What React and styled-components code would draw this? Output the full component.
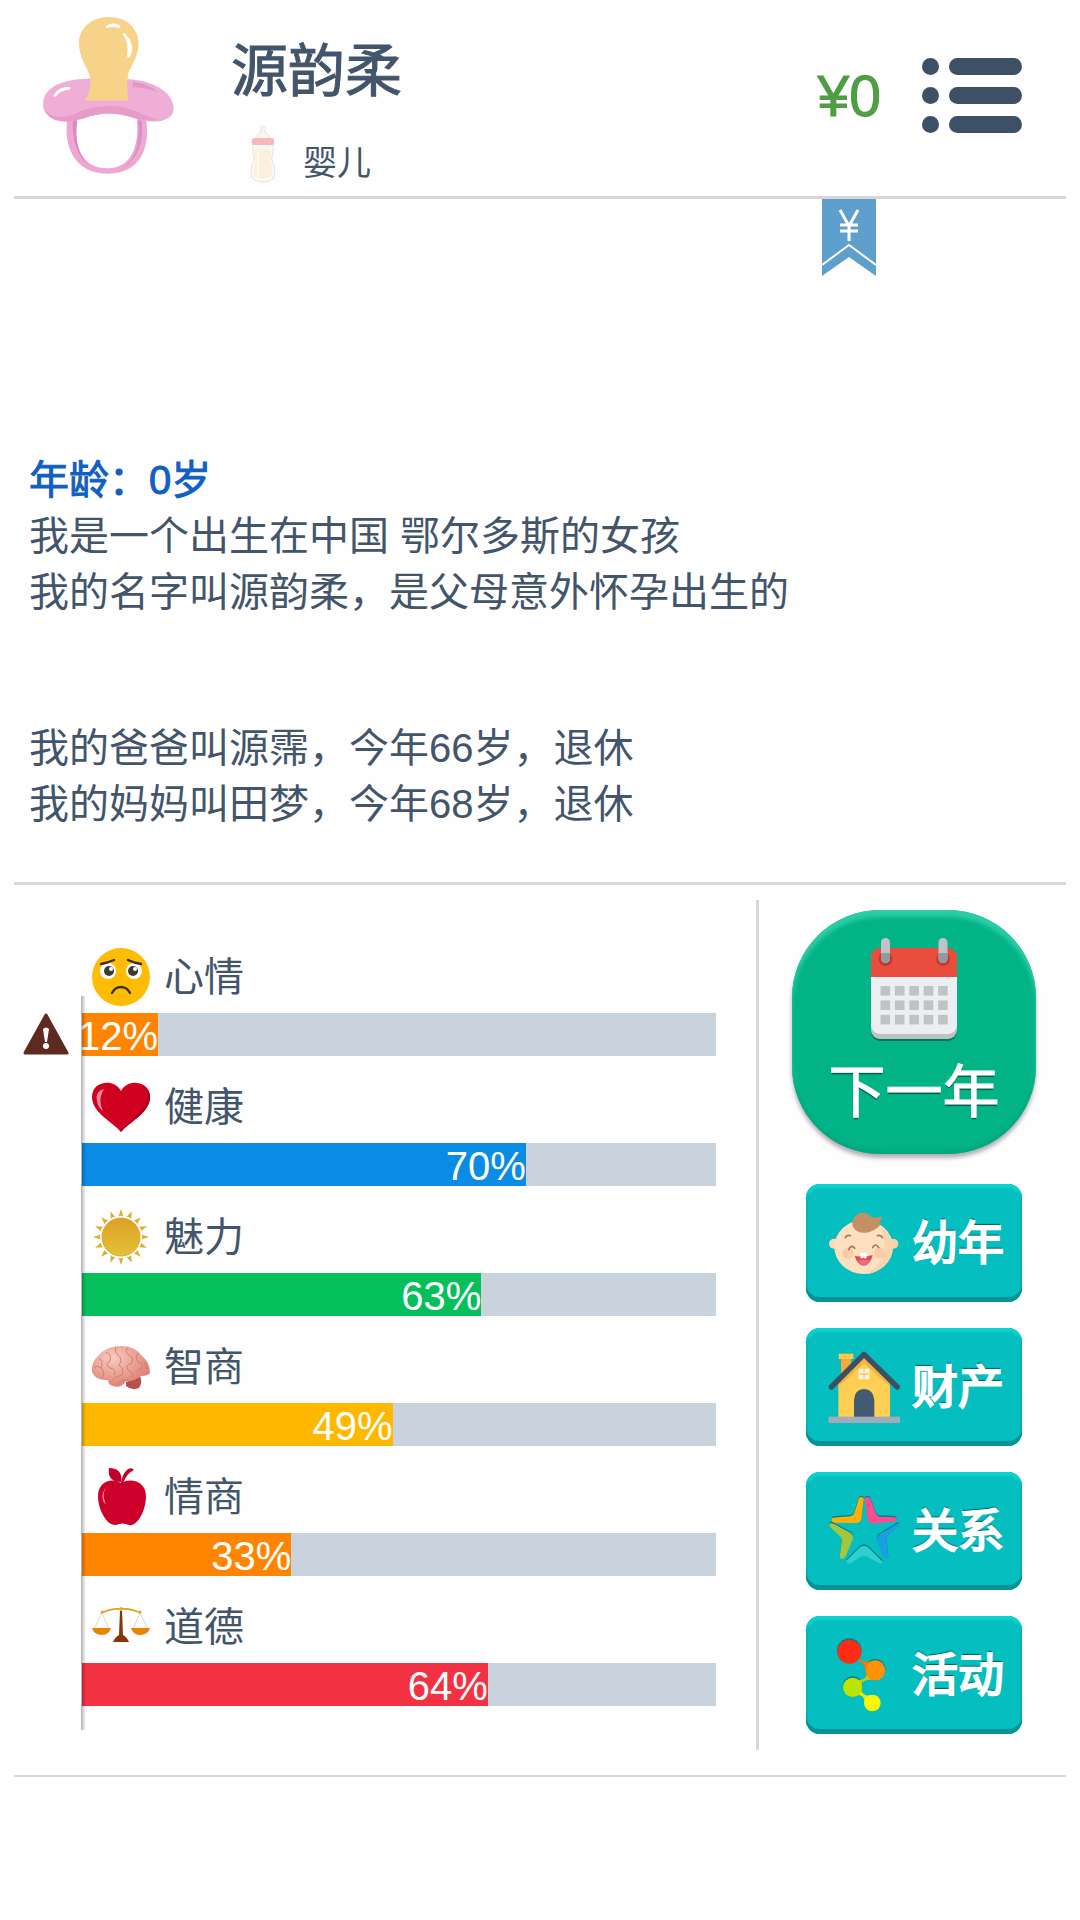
import React from "react";
import styled, { createGlobalStyle } from "styled-components";

const stats = [
  { name: "心情", value: 12, color: "#ff8400", icon: <SadFace />, warn: true },
  { name: "健康", value: 70, color: "#0a8ce4", icon: <Heart /> },
  { name: "魅力", value: 63, color: "#05bf5a", icon: <Sun /> },
  { name: "智商", value: 49, color: "#ffb800", icon: <Brain /> },
  { name: "情商", value: 33, color: "#ff8400", icon: <Apple /> },
  { name: "道德", value: 64, color: "#f23143", icon: <Scales /> }
];

const actions = [
  { name: "幼年", icon: <Baby /> },
  { name: "财产", icon: <House /> },
  { name: "关系", icon: <Star /> },
  { name: "活动", icon: <Dots /> }
];

export default function App() {
  return (
    <Page>
      <GlobalStyle />
      <Header>
        <Pacifier />
        <Person>
          <Name>源韵柔</Name>
          <Stage>
            <Bottle />
            <span>婴儿</span>
          </Stage>
        </Person>
        <Money>¥0</Money>
        <MenuButton aria-label="菜单">
          <MenuIcon />
        </MenuButton>
        <Ribbon aria-label="财务">
          <RibbonIcon />
        </Ribbon>
      </Header>

      <Log>
        <Age>年龄：0岁</Age>
        <Entry>
          我是一个出生在中国 鄂尔多斯的女孩
          <br />
          我的名字叫源韵柔，是父母意外怀孕出生的
        </Entry>
        <Entry>
          我的爸爸叫源霈，今年66岁，退休
          <br />
          我的妈妈叫田梦，今年68岁，退休
        </Entry>
      </Log>

      <Panel>
        <Stats>
          {stats.map(stat => (
            <Stat key={stat.name}>
              <StatLabel>
                {stat.icon}
                <span>{stat.name}</span>
              </StatLabel>
              <Gutter>{stat.warn && <Warning />}</Gutter>
              <Track
                role="meter"
                aria-label={stat.name}
                aria-valuemin={0}
                aria-valuemax={100}
                aria-valuenow={stat.value}
              >
                <Fill color={stat.color} style={{ width: `${stat.value}%` }}>
                  {stat.value}%
                </Fill>
              </Track>
            </Stat>
          ))}
        </Stats>

        <Actions>
          <NextYear>
            <Calendar />
            <span>下一年</span>
          </NextYear>
          {actions.map(action => (
            <ActionButton key={action.name}>
              {action.icon}
              <span>{action.name}</span>
            </ActionButton>
          ))}
        </Actions>
      </Panel>
    </Page>
  );
}

function Pacifier() {
  return (
    <svg width="131" height="157" viewBox="129 51 394 472" aria-hidden="true">
      <path
        d="M204 350C188 430 218 522 323 522C432 522 452 430 438 350L411 350C420 430 400 506 323 506C240 506 218 430 233 350Z"
        fill="#eda8d1"
      />
      <path
        d="M219 362C216 425 234 485 290 508C240 485 222 430 232 362Z"
        fill="#dd86bd"
      />
      <path
        d="M425 362C435 425 412 485 362 510C410 480 422 430 414 362Z"
        fill="#dd8fc0"
      />
      <path
        d="M272 236C210 238 130 250 129 315C130 345 160 366 200 365C250 363 270 341 330 341C385 341 400 362 455 365C495 367 522 352 522 325C520 272 450 240 385 238Z"
        fill="#eeaed6"
      />
      <path
        d="M133 325C145 352 185 358 220 344C265 322 305 317 345 319C395 322 425 345 475 360C420 370 395 343 330 341C270 341 250 363 200 365C165 366 138 350 133 325Z"
        fill="#e79bc8"
      />
      <path d="M400 246Q450 252 475 278Q440 262 398 262Z" fill="#e297c6" />
      <path d="M160 289Q172 262 206 261Q218 265 206 270Q180 273 168 289Q162 292 160 289Z" fill="#fff" />
      <path
        d="M272 240C268 205 237 180 237 130C237 85 275 51 327 51C380 51 416 85 416 130C416 170 395 198 388 213C380 235 382 272 385 302L254 302C268 285 272 262 272 240Z"
        fill="#f6d388"
      />
      <path d="M318 78Q338 64 360 76Q366 84 356 84Q338 78 322 84Q316 83 318 78Z" fill="#fff" />
      <path d="M371 98Q392 112 397 140Q399 162 388 173Q381 174 382 163Q388 128 370 104Q367 98 371 98Z" fill="#fff" />
    </svg>
  );
}

function Bottle() {
  return (
    <svg width="26" height="58" viewBox="0 0 26 58" aria-hidden="true">
      <path d="M6 14Q7 8 11 7V2Q13 0 15 2V7Q19 8 20 14Z" fill="#fbf3ee" stroke="#eee4df" />
      <path d="M3 19H23V29Q20 33 24 40Q26 50 23 54Q13 60 3 54Q0 50 2 40Q6 33 3 29Z" fill="#fdfaf6" stroke="#e9dfd8" />
      <path d="M5 24H21V31Q19 35 22 41Q23 49 21 52Q13 55 5 52Q3 49 4 41Q7 35 5 31Z" fill="#fbf0dc" />
      <rect x="2" y="13" width="22" height="7" rx="2" fill="#f5b9bd" />
      <path d="M8 26V50" stroke="#fffaf0" strokeWidth="2" />
    </svg>
  );
}

function MenuIcon() {
  return (
    <svg width="100" height="75" viewBox="0 0 100 75" fill="#3d5065" aria-hidden="true">
      {[0, 29, 58].map(y => (
        <g key={y}>
          <circle cx="8.5" cy={y + 8.5} r="8.5" />
          <rect x="27" y={y} width="73" height="17" rx="8.5" />
        </g>
      ))}
    </svg>
  );
}

function RibbonIcon() {
  return (
    <svg width="54" height="77" viewBox="0 0 54 77" aria-hidden="true">
      <path d="M0 0H54V77L27 58L0 77Z" fill="#5f9fce" />
      <path d="M0 66L27 46L54 66" fill="none" stroke="#fff" strokeWidth="2" />
      <path d="M18 11L27 27L36 11M18 26H36M18 32H36M27 26V42" fill="none" stroke="#fff" strokeWidth="3" />
    </svg>
  );
}

function Warning() {
  return (
    <svg width="46" height="42" viewBox="0 0 46 42" aria-label="警告">
      <path d="M23 2L44 40H2Z" fill="#5e2a20" stroke="#5e2a20" strokeWidth="3" strokeLinejoin="round" />
      <path d="M20 16Q23 13 26 16L24 29H22Z" fill="#fff" />
      <circle cx="23" cy="33" r="3" fill="#fff" />
    </svg>
  );
}

function SadFace() {
  return (
    <svg width="58" height="58" viewBox="0 0 58 58" aria-hidden="true">
      <circle cx="29" cy="29" r="29" fill="#ffbc05" />
      <circle cx="16" cy="23" r="8" fill="#fff" />
      <circle cx="42" cy="23" r="8" fill="#fff" />
      <circle cx="17" cy="23" r="5" fill="#3b3835" />
      <circle cx="41" cy="23" r="5" fill="#3b3835" />
      <circle cx="19" cy="21" r="2" fill="#fff" />
      <circle cx="43" cy="21" r="2" fill="#fff" />
      <path d="M9 16Q15 15 22 12M36 12Q42 15 49 16M20 45Q23 39 29 39Q35 39 38 45" fill="none" stroke="#3b3020" strokeWidth="2.4" strokeLinecap="round" />
    </svg>
  );
}

function Heart() {
  return (
    <svg width="58" height="58" viewBox="0 0 58 58" aria-hidden="true">
      <path d="M29 54C21 44 0 35 0 19C0 3 22 0 29 13C36 0 58 3 58 19C58 35 37 44 29 54Z" fill="#d00021" />
      <path d="M29 54C37 44 58 35 58 19Q58 14 55 11Q58 22 51 30Q44 40 28 52Z" fill="#ad001c" />
      <path d="M12 11Q3 13 5 23Q6 30 11 33Q7 24 9 18Q10 14 12 11Z" fill="#f0899a" />
    </svg>
  );
}

function Sun() {
  const rays = Array.from({ length: 16 }, (_, i) => i * 22.5);
  return (
    <svg width="58" height="58" viewBox="0 0 58 58" aria-hidden="true">
      <defs>
        <linearGradient id="sun" x1="0" y1="0" x2="0" y2="1">
          <stop offset="0" stopColor="#dd9f27" />
          <stop offset="1" stopColor="#e4c236" />
        </linearGradient>
      </defs>
      {rays.map(angle => (
        <path key={angle} d="M26.500 8.500L29 1L31.500 8.500Q29 7 26.500 8.500Z" fill="#d9b02f" transform={`rotate(${angle} 29 29)`} />
      ))}
      <circle cx="29" cy="29" r="19" fill="url(#sun)" stroke="#d3a83a" />
    </svg>
  );
}

function Brain() {
  return (
    <svg width="58" height="58" viewBox="0 0 58 58" aria-hidden="true">
      <defs>
        <radialGradient id="brain" cx=".36" cy=".3" r=".7">
          <stop offset="0" stopColor="#f8cbc1" />
          <stop offset="1" stopColor="#de8274" />
        </radialGradient>
      </defs>
      <path d="M34 44L48 38Q51 44 47 50Q40 53 34 48Z" fill="#b55249" />
      <path
        d="M0 34Q-1 24 6 18Q14 8 28 8Q42 7 50 18Q58 24 58 35Q56 38 49 38Q42 44 34 43Q29 51 21 48Q16 47 16 42Q4 43 0 34Z"
        fill="url(#brain)"
      />
      <path
        d="M7 20Q12 24 9 30Q14 34 10 40M14 14Q20 17 18 23Q12 26 18 30Q25 31 22 37M24 9Q22 14 27 18Q31 22 27 27Q33 31 30 37Q24 38 20 42M36 9Q32 14 37 17Q43 20 39 26Q33 26 36 32Q42 34 40 40M47 16Q42 18 46 24Q52 25 49 31Q44 31 46 36M26 45Q30 41 36 42M2 29Q6 27 9 30M53 24Q52 28 56 32"
        fill="none"
        stroke="#cf7f73"
        strokeWidth="1"
      />
    </svg>
  );
}

function Apple() {
  return (
    <svg width="58" height="58" viewBox="0 0 58 58" aria-hidden="true">
      <path d="M29 15C40 9 54 14 54 28C54 43 45 59 37 57Q30 54 24 57C15 58 6 42 6 28C6 14 19 9 29 15Z" fill="#cc002b" />
      <path d="M29 14Q15 14 17 0Q31 0 29 14ZM29 15Q30 6 36 1Q40 -1 42 2Q35 5 31 15Z" fill="#c4002a" />
      <path d="M14 20Q9 24 11 33L14 37Q11 29 12 24Z" fill="#ef8b9d" />
    </svg>
  );
}

function Scales() {
  return (
    <svg width="58" height="58" viewBox="0 0 58 58" aria-hidden="true">
      <path d="M10 15L2 31M10 15L17 31M48 15L41 31M48 15L56 31" stroke="#d8cdb4" strokeWidth=".8" />
      <path d="M9 15Q20 10 29 11Q38 10 49 15" fill="none" stroke="#dca11b" strokeWidth="1.6" />
      <circle cx="29" cy="11" r="2" fill="#e5ad25" />
      <circle cx="10" cy="14" r="1.500" fill="#e5ad25" />
      <circle cx="48" cy="14" r="1.500" fill="#e5ad25" />
      <path d="M28 13H30L31 37Q35 39 37 44H21Q23 39 27 37Z" fill="#843708" />
      <path d="M0 30H19Q17 37 10 37Q2 37 0 30ZM39 30H58Q56 37 48 37Q41 37 39 30Z" fill="#e98305" />
    </svg>
  );
}

function Calendar() {
  return (
    <svg width="88" height="104" viewBox="0 0 88 104" aria-hidden="true">
      <rect x="1" y="13" width="86" height="90" rx="9" fill="#08785d" />
      <rect x="1" y="12" width="86" height="89" rx="9" fill="#bcc3c7" />
      <rect x="1" y="12" width="86" height="84" rx="9" fill="#eceff1" />
      <path d="M1 39V20Q1 10 11 10H77Q87 10 87 20V39Z" fill="#e84d3d" />
      <circle cx="15.500" cy="21" r="7" fill="#c33a2c" />
      <circle cx="73" cy="21" r="7" fill="#c33a2c" />
      <rect x="11" y="0" width="9" height="25" rx="4.500" fill="#bdc3c7" />
      <rect x="68.500" y="0" width="9" height="25" rx="4.500" fill="#bdc3c7" />
      <path d="M11 15H20V20Q20 25 15.500 25Q11 25 11 20ZM68.500 15H77.500V20Q77.500 25 73 25Q68.500 25 68.500 20Z" fill="#8f9b9e" />
      {[48, 62.4, 76.8].map(y =>
        [10.5, 24.9, 39.3, 53.7, 68.1].map(x => (
          <rect key={x + "-" + y} x={x} y={y} width="9.600" height="9.600" fill="#bdc3c7" />
        ))
      )}
    </svg>
  );
}

function Baby() {
  return (
    <svg width="72" height="72" viewBox="144 110 216 216" aria-hidden="true">
      <circle cx="162" cy="220" r="15" fill="#fad9b5" />
      <circle cx="340" cy="220" r="15" fill="#f8d0a8" />
      <ellipse cx="251" cy="230" rx="88" ry="81" fill="#fce0c0" />
      <path d="M300 165Q352 210 333 257Q310 305 258 311Q300 290 312 250Q318 205 300 165Z" fill="#f9d3ad" />
      <circle cx="204" cy="248" r="17" fill="#f9cba8" />
      <circle cx="299" cy="248" r="17" fill="#f9cba8" />
      <path d="M218 168Q212 140 240 128Q262 124 274 140Q288 146 304 137Q308 150 294 158Q306 160 306 156Q296 176 270 184Q232 196 218 168Z" fill="#c49063" />
      <path d="M196 202Q200 192 211 196M292 196Q303 192 307 202M206 238Q214 220 224 234M278 232Q286 216 296 232" fill="none" stroke="#a8774e" strokeWidth="5" strokeLinecap="round" />
      <path d="M224 256Q251 262 278 254Q272 283 252 286Q232 284 224 256Z" fill="#e4485d" />
      <path d="M234 272Q250 266 268 270Q262 284 252 286Q240 284 234 272Z" fill="#ee6b85" />
      <path d="M242 248H260V264H252V258L250 264H242Z" fill="#fff" />
    </svg>
  );
}

function House() {
  return (
    <svg width="72" height="74" viewBox="144 540 216 222" aria-hidden="true">
      <path d="M183 560H213V600L183 630Z" fill="#f8a83a" />
      <rect x="176" y="551" width="44" height="16" fill="#fdc94e" />
      <path d="M252 555L330 630V742H175V630Z" fill="#fecf52" />
      <path d="M252 555L330 630V650L252 580L175 650V630Z" fill="#f4b440" />
      <path d="M154 651L252 553L352 651" fill="none" stroke="#3d4f63" strokeWidth="16" strokeLinecap="round" strokeLinejoin="round" />
      <path d="M222 742V690Q224 658 252 657Q280 658 283 690V742Z" fill="#425b72" />
      <rect x="236" y="596" width="32" height="32" fill="#fff6df" />
      <path d="M252 596V628M236 612H268" stroke="#f8c863" strokeWidth="4" />
      <rect x="145" y="740" width="215" height="19" fill="#9fadba" />
    </svg>
  );
}

const starArms = [
  {
    color: "#ffb006",
    d: "M117 40Q123 32 131 40L125 98Q122 114 108 114L40 113Q30 106 38 98L92 94Q100 93 103 84Z"
  },
  {
    color: "#ff4b90",
    d: "M134 40Q143 32 150 40L166 82Q170 94 180 95L226 97Q234 103 226 109L160 116Q146 116 143 102Z"
  },
  {
    color: "#a2c63f",
    d: "M28 117Q34 112 42 117L92 144Q102 152 98 164L76 216Q66 228 59 216L65 170Q67 160 60 154L30 126Z"
  },
  {
    color: "#18a1e2",
    d: "M236 114L184 145Q168 154 171 168L188 215Q196 226 205 220L200 170Q198 158 208 148L238 122Z"
  },
  {
    color: "#2ed0cf",
    d: "M78 228L118 188Q132 176 146 188L188 230Q186 240 176 234L144 216Q132 210 120 216L90 236Q80 238 78 228Z"
  }
];

function Star() {
  return (
    <svg width="72" height="72" viewBox="24 30 216 216" aria-hidden="true">
      {starArms.map(arm => (
        <g key={arm.color}>
          <path d={arm.d} fill="#087d82" transform="translate(0 -4)" />
          <path d={arm.d} fill={arm.color} />
        </g>
      ))}
    </svg>
  );
}

function Dots() {
  return (
    <svg width="72" height="74" viewBox="144 563 216 222" aria-hidden="true">
      <g fill="#077d82" transform="translate(0 -3)">
        <circle cx="208" cy="604" r="37" />
        <circle cx="286" cy="660" r="31" />
        <circle cx="218" cy="711" r="30" />
      </g>
      <path d="M225 620Q245 638 272 636L260 662Q255 635 225 620Z" fill="#ff7308" stroke="#ff7308" strokeWidth="4" />
      <path d="M262 665Q262 688 235 690L240 705Q250 685 285 688Z" fill="#e0c108" />
      <path d="M230 735Q248 730 256 755L270 736Q248 738 240 712Z" fill="#e0f005" />
      <circle cx="208" cy="604" r="36" fill="#ff2b12" />
      <circle cx="286" cy="660" r="30" fill="#ff9200" />
      <circle cx="218" cy="711" r="29" fill="#bce402" />
      <circle cx="277" cy="758" r="25" fill="#faf800" />
    </svg>
  );
}

const GlobalStyle = createGlobalStyle`
  * {
    box-sizing: border-box;
  }

  body {
    margin: 0;
    background: #fefefe;
    color: #42556b;
    font-family: "Liberation Sans", "Noto Sans CJK SC", sans-serif;
  }

  button {
    padding: 0;
    border: 0;
    background: none;
    font-family: inherit;
    cursor: pointer;
  }

  svg {
    display: block;
    flex-shrink: 0;
  }
`;

const Page = styled.div`
  display: flex;
  flex-direction: column;
  min-height: 100vh;
  padding: 0 14px 143px;
`;

const Header = styled.header`
  position: relative;
  display: flex;
  align-items: center;
  padding: 8px 44px 13px 29px;
  border-bottom: 3px solid #d7d7da;
`;

const Person = styled.div`
  flex: 1;
  margin-left: 57px;
`;

const Name = styled.h1`
  margin: 0;
  padding: 23px 0 14px;
  font-size: 57px;
  font-weight: 400;
  line-height: 80px;
  -webkit-text-stroke: 1px currentColor;
`;

const Stage = styled.div`
  display: flex;
  align-items: flex-end;
  gap: 27px;
  padding-left: 19px;
  font-size: 34px;
  line-height: 40px;
`;

const Money = styled.div`
  margin-right: 41px;
  color: #4f9d45;
  font-size: 57px;
  line-height: 64px;
  -webkit-text-stroke: 1px currentColor;
`;

const MenuButton = styled.button``;

const Ribbon = styled.button`
  position: absolute;
  top: 100%;
  right: 190px;
  margin-top: 3px;
`;

const Log = styled.main`
  display: flex;
  flex: 1;
  flex-direction: column;
  justify-content: flex-end;
  padding: 50px 15px;
  font-size: 40px;
  line-height: 56px;
`;

const Age = styled.h2`
  margin: 0;
  color: #125fc4;
  font-size: 40px;
  font-weight: 400;
  -webkit-text-stroke: 1px currentColor;
`;

const Entry = styled.p`
  margin: 0;

  & + & {
    margin-top: 100px;
  }
`;

const Panel = styled.section`
  display: flex;
  padding: 15px 0 25px;
  border-top: 3px solid #d7d7da;
  border-bottom: 2px solid #d7d7da;
`;

const Stats = styled.div`
  position: relative;
  display: flex;
  flex: 1;
  flex-direction: column;
  gap: 22px;
  padding: 48px 40px 44px 0;

  /* axis drawn over the start of every bar */
  &::after {
    content: "";
    position: absolute;
    top: 96px;
    bottom: 20px;
    left: 67px;
    width: 5px;
    background: linear-gradient(to right, rgba(0, 0, 0, 0.3), rgba(0, 0, 0, 0));
  }
`;

const Stat = styled.div`
  display: grid;
  grid-template-columns: 68px 1fr;
  row-gap: 7px;
`;

const StatLabel = styled.div`
  display: flex;
  grid-column: 2;
  align-items: center;
  gap: 14px;
  padding-left: 10px;
  font-size: 40px;
  line-height: 58px;
`;

const Gutter = styled.div`
  padding-left: 9px;
`;

const Track = styled.div`
  height: 43px;
  background: #c9d3dd;
`;

const Fill = styled.div`
  display: flex;
  justify-content: flex-end;
  height: 100%;
  background: ${props => props.color};
  color: #fff;
  font-size: 40px;
  line-height: 46px;
`;

const Actions = styled.nav`
  display: flex;
  flex-direction: column;
  align-items: center;
  gap: 26px;
  width: 310px;
  padding: 10px 0 16px 3px;
  border-left: 3px solid #d7d7da;
`;

const NextYear = styled.button`
  display: flex;
  flex-direction: column;
  align-items: center;
  gap: 10px;
  width: 244px;
  height: 244px;
  margin-bottom: 4px;
  padding-top: 28px;
  border-radius: 88px;
  background: #02b386;
  box-shadow: inset 0 7px 4px #2bcda5, inset 0 -3px 4px #03a57c,
    0 4px 4px rgba(40, 20, 50, 0.35);
  color: #fff;
  font-size: 57px;
  line-height: 80px;
  text-shadow: 0 2px 1px rgba(0, 0, 0, 0.5);
  -webkit-text-stroke: 1px #fff;
`;

const ActionButton = styled.button`
  display: flex;
  align-items: center;
  gap: 12px;
  width: 216px;
  height: 118px;
  padding-left: 22px;
  border-radius: 14px;
  background: #04bebf;
  box-shadow: inset 0 -5px 0 #049496, inset 0 4px 2px #0ad3d2,
    inset 0 0 2px 1px #079a9d;
  color: #fff;
  font-size: 46px;
  line-height: 64px;
  text-shadow: 0 -2px 1px rgba(0, 60, 60, 0.7);
  -webkit-text-stroke: 2px #fff;
`;
